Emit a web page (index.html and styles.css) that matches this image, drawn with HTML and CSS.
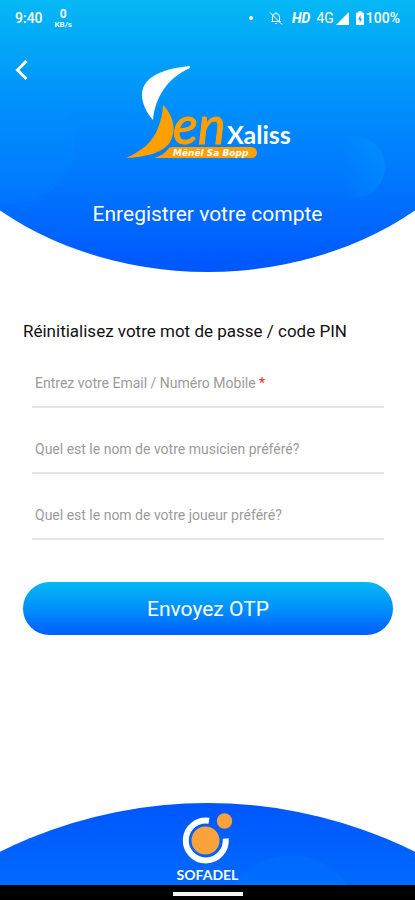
FILE: index.html
```html
<!DOCTYPE html>
<html lang="fr">
<head>
  <meta charset="UTF-8">
  <meta name="viewport" content="width=device-width, initial-scale=1.0">
  <title>SenXaliss</title>
  <link rel="stylesheet" href="styles.css">
</head>
<body>
  <header class="header">
    <div class="status-bar">
      <span>9:40</span>
      <span class="net-speed"><b>0</b><small>KB/s</small></span>
      <span class="dot"></span>
      <svg class="bell" width="14" height="14" viewBox="0 0 14 14" fill="none" stroke="#fff">
        <path d="M3.5 10.5V6a3.500 3.500 0 0 1 7 0v4.500M2 10.500h10M7 1v1.500M6 12.500h2M1 1.500l12 12"/>
      </svg>
      <em class="hd">HD</em>
      <span class="net-type">4G</span>
      <svg width="13" height="13" viewBox="0 0 13 13"><path d="M13 0v13H0z" fill="#fff"/></svg>
      <svg class="battery" width="8" height="14" viewBox="0 0 8 14">
        <path d="M2.500 0h3v1.500H7a1 1 0 0 1 1 1V13a1 1 0 0 1-1 1H1a1 1 0 0 1-1-1V2.500a1 1 0 0 1 1-1h1.500z" fill="#fff"/>
        <path d="M4.500 4L2 8.500h1.700V12L6 7.500H4.500z" fill="#07aaf5"/>
      </svg>
      <span>100%</span>
    </div>

    <button class="back" type="button" aria-label="Retour">
      <svg width="14" height="20" viewBox="0 0 14 20" fill="none" stroke="#fff" stroke-width="3">
        <path d="M11.500 1L2.500 10l9 9"/>
      </svg>
    </button>

    <svg class="logo" width="166" height="98" viewBox="0 0 166 98">
      <!-- sail -->
      <path d="M65 0C43 2 17 9 17 29c0 9 5 18 11 25C30 32 42 12 65 2z" fill="#fff"/>
      <path d="M38 39c9 9 14 23 8 35-5 12-24 17-45 18 16-7 27-16 32-30 3-8 5-15 5-23z" fill="#ffa000"/>
      <!-- tagline band -->
      <path d="M29 92c7-2 11-5 15-10 1-1 3-1 5-1h77c8 0 8 11 0 11z" fill="#ffa000"/>
      <text class="logo-en" x="48" y="78">en</text>
      <text class="logo-name" x="102" y="78">Xaliss</text>
      <text class="logo-tag" x="48" y="90">Mënël Sa Bopp</text>
    </svg>

    <h1 class="title">Enregistrer votre compte</h1>
  </header>

  <main class="content">
    <h2>Réinitialisez votre mot de passe / code PIN</h2>
    <form class="form">
      <div class="field">
        <input id="account" type="text" required placeholder=" ">
        <label for="account">Entrez votre Email / Numéro Mobile <span class="required">*</span></label>
      </div>
      <div class="field">
        <input id="musician" type="text" placeholder=" ">
        <label for="musician">Quel est le nom de votre musicien préféré?</label>
      </div>
      <div class="field">
        <input id="player" type="text" placeholder=" ">
        <label for="player">Quel est le nom de votre joueur préféré?</label>
      </div>
      <button class="submit" type="submit">Envoyez OTP</button>
    </form>
  </main>

  <footer class="footer">
    <svg width="52" height="52" viewBox="0 0 52 52">
      <path d="M27 7.700A20 20 0 1 0 43.700 25.500" fill="none" stroke="#fff" stroke-width="6"/>
      <circle cx="23.500" cy="27.500" r="14" fill="#fba23c"/>
      <circle cx="42.500" cy="8" r="7.700" fill="#fba23c"/>
    </svg>
    <span class="brand">SOFADEL</span>
  </footer>
  <div class="nav-bar"><span></span></div>
</body>
</html>
```

FILE: styles.css
```css
* {
  box-sizing: border-box;
}

body {
  margin: 0;
  min-height: 100vh;
  display: flex;
  flex-direction: column;
  background-color: #fff;
  color: #111;
  font-family: Roboto, sans-serif;
}

/* Header */
.header {
  position: relative;
  display: flex;
  flex-direction: column;
  padding: 8px 15px 46px;
  color: #fff;
  /* pale bubble over the main gradient */
  background:
    radial-gradient(circle at 3% 52%, rgba(0, 150, 255, 0.15) 62px, transparent 63px),
    linear-gradient(#05b8f4, #0090fb 38%, #0078ff 65%, #0056ff);
  clip-path: ellipse(79% 100% at 50% 0);
}

/* second bubble, fading out to the left */
.header::after {
  content: "";
  position: absolute;
  top: 136px;
  right: 30px;
  width: 62px;
  height: 62px;
  border-radius: 50%;
  background: linear-gradient(to right, transparent 30%, rgba(0, 160, 255, 0.35));
}

.status-bar {
  display: flex;
  align-items: center;
  height: 20px;
  font-size: 14px;
  font-weight: 500;
}

.net-speed {
  display: flex;
  flex-direction: column;
  align-items: center;
  margin-left: 12px;
}

.net-speed b {
  font-size: 12px;
  line-height: 14px;
}

.net-speed small {
  font-size: 8px;
  line-height: 8px;
}

.dot {
  width: 4px;
  height: 4px;
  margin-left: auto;
  border-radius: 50%;
  background-color: #fff;
}

.bell {
  margin-left: 16px;
}

.hd {
  margin: 0 6px 0 9px;
  font-weight: 700;
}

.net-type {
  font-weight: 400;
  margin-right: 2px;
}

.battery {
  margin: 0 2px 0 7px;
}

.back {
  align-self: flex-start;
  height: 20px;
  margin-top: 32px;
  padding: 0;
  border: none;
  background: none;
  cursor: pointer;
}

.logo {
  align-self: center;
  margin-top: -14px;
}

.logo-en {
  fill: #ffa000;
  stroke: #ffa000;
  stroke-width: 1px;
  font: italic 52px Lato, sans-serif;
}

.logo-name {
  fill: #fff;
  font: bold 25px Lato, sans-serif;
}

.logo-tag {
  fill: #fff;
  font: italic bold 9px "DejaVu Sans", sans-serif;
}

.title {
  margin: 38px 0 0;
  font-size: 21px;
  font-weight: 400;
  line-height: 24px;
  text-align: center;
}

/* Form */
.content {
  padding: 48px 22px 48px 23px;
}

.content h2 {
  margin: 0;
  font-size: 17px;
  font-weight: 400;
  line-height: 22px;
}

.form {
  display: flex;
  flex-direction: column;
}

.field {
  display: grid;
  margin: 0 9px;
  border-bottom: 2px solid #e4e4e4;
}

/* label sits in the same cell as the input until something is typed */
.field input,
.field label {
  grid-area: 1 / 1;
}

.field input {
  width: 100%;
  height: 64px;
  padding: 16px 3px 0;
  border: none;
  outline: none;
  background: none;
  font: 14px Roboto, sans-serif;
}

.field label {
  padding: 32px 3px 0;
  color: #9b9b9b;
  font-size: 14px;
  line-height: 18px;
  pointer-events: none;
}

.field input:not(:placeholder-shown) + label {
  padding-top: 8px;
}

.required {
  color: #f22;
}

.submit {
  height: 53px;
  margin-top: 42px;
  border: none;
  border-radius: 27px;
  background: linear-gradient(#05b8f4, #0091fb 50%, #005cff);
  color: #fff;
  font: 21px Roboto, sans-serif;
  cursor: pointer;
}

/* Footer */
.footer {
  display: flex;
  flex-direction: column;
  align-items: center;
  height: 82px;
  margin-top: auto;
  padding-top: 10px;
  background:
    radial-gradient(circle at 70% 150%, rgba(0, 125, 255, 0.25) 70px, transparent 71px),
    linear-gradient(#0056ff, #006aff);
  clip-path: ellipse(112% 566% at 50% 566%);
}

.brand {
  color: #fff;
  font: bold 14px/20px Lato, sans-serif;
}

.nav-bar {
  display: flex;
  justify-content: center;
  padding: 7px 0 4px;
  background-color: #000;
}

.nav-bar span {
  width: 70px;
  height: 4px;
  background-color: #f4f4f4;
}
```
